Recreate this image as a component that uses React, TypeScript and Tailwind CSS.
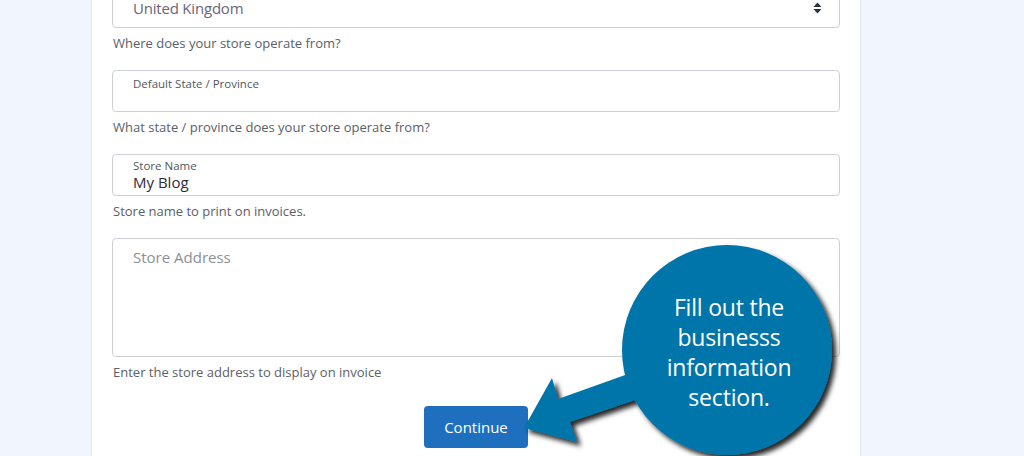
import React from "react";

const font = { fontFamily: '"Open Sans", "Noto Sans", sans-serif' };

function Helper({ children }: { children: React.ReactNode }) {
  return (
    <p className="mt-[6px] text-[13px] leading-[18px] text-[#5b6068] pl-px">{children}</p>
  );
}

export default function App() {
  return (
    <div className="relative w-[1024px] h-[456px] overflow-hidden bg-[#f1f5fe]" style={font}>
      <div className="ml-[91px] w-[770px] h-[456px] bg-white border-x border-[#e3e6ec] px-[20px] flex flex-col">
        <div className="mt-[-14px] flex flex-col">
          {/* Country select */}
          <div className="h-[42px] border border-[#ccd0d6] rounded-[4px] flex items-start justify-between pl-[20px] pr-[17px] pt-[13px]">
            <div className="text-[15px] leading-[17px] text-[#6b6478] tracking-[-0.2px]">United Kingdom</div>
            <svg width="9" height="12" viewBox="0 0 9 12" className="mt-[2px]">
              <path d="M4.5 0.5 L8.5 5 L0.5 5 Z" fill="#2c3338" />
              <path d="M0.5 7 L8.5 7 L4.5 11.5 Z" fill="#2c3338" />
            </svg>
          </div>
          <Helper>Where does your store operate from?</Helper>

          {/* State */}
          <div className="mt-[18px] h-[42px] border border-[#ccd0d6] rounded-[4px] pl-[20px] pt-[5px]">
            <div className="text-[11.5px] leading-[16px] text-[#50575e]">Default State / Province</div>
          </div>
          <Helper>What state / province does your store operate from?</Helper>

          {/* Store name */}
          <div className="mt-[18px] h-[42px] border border-[#ccd0d6] rounded-[4px] pl-[20px] pt-[4px] flex flex-col">
            <div className="text-[11.5px] leading-[14px] text-[#50575e]">Store Name</div>
            <div className="text-[15px] leading-[20px] text-[#2c2c3a] -mt-[1px]">My Blog</div>
          </div>
          <Helper>Store name to print on invoices.</Helper>

          {/* Address */}
          <div className="mt-[18px] h-[119px] border border-[#ccd0d6] rounded-[4px] pl-[20px] pt-[9px]">
            <div className="text-[15px] leading-[20px] text-[#8c8f94] -mt-[1px]">Store Address</div>
          </div>
          <Helper>Enter the store address to display on invoice</Helper>

          <div className="mt-[25px] flex justify-center">
            <button className="w-[104px] h-[42px] rounded-[4px] bg-[#1e70bf] text-white text-[15px]">
              Continue
            </button>
          </div>
        </div>
      </div>

      {/* Callout overlay */}
      <svg className="absolute inset-0 pointer-events-none" width="1024" height="456" viewBox="0 0 1024 456">
        <defs>
          <filter id="sh" x="-20%" y="-20%" width="140%" height="140%">
            <feDropShadow dx="4" dy="4" stdDeviation="2.5" floodColor="#000" floodOpacity="0.85" />
          </filter>
        </defs>
        <g filter="url(#sh)" fill="#0474aa">
          <polygon points="524,428 552,378 558,399 628,374 638,399 570,422 577,442" />
          <circle cx="727" cy="350" r="105" />
        </g>
      </svg>
      <div
        className="absolute left-[624px] top-[292px] w-[210px] text-center text-white text-[23px] leading-[30px] tracking-[-0.2px]"
        style={font}
      >
        Fill out the
        <br />
        businesss
        <br />
        information
        <br />
        section.
      </div>
    </div>
  );
}
